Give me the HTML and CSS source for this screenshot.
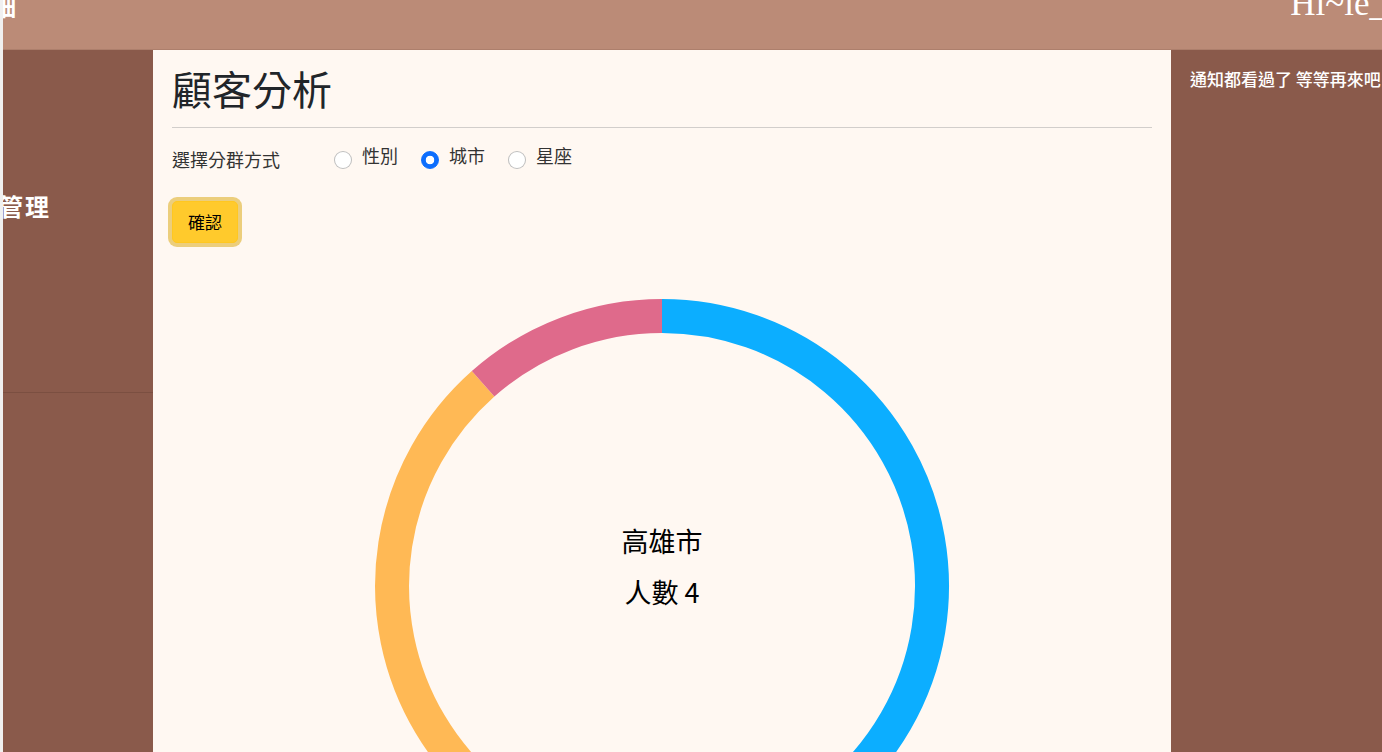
FILE: index.html
```html
<!DOCTYPE html>
<html lang="zh-Hant">
<head>
<meta charset="utf-8">
<title>顧客分析</title>
<link rel="stylesheet" href="styles.css">
</head>
<body>
<div class="page">
  <header class="topbar">
    <div class="brand">細</div>
    <div class="greeting">Hi~ie_</div>
  </header>
  <div class="layout">
    <aside class="sidebar">
      <div class="nav-item">管理</div>
      <div class="nav-item nav-item--rest"></div>
    </aside>
    <main class="content">
      <h1 class="title">顧客分析</h1>
      <hr class="divider">
      <div class="group-row">
        <span class="group-label">選擇分群方式</span>
        <label class="option"><input type="radio" name="group" class="radio"><span class="option-text">性別</span></label>
        <label class="option"><input type="radio" name="group" class="radio" checked><span class="option-text">城市</span></label>
        <label class="option"><input type="radio" name="group" class="radio"><span class="option-text">星座</span></label>
      </div>
      <button class="confirm-btn" type="button">確認</button>
      <div class="chart">
        <svg class="donut" viewBox="-290 -290 580 580" width="580" height="580">
          <path d="M 0 -270 A 270 270 0 0 1 92.35 253.72" stroke="#0caeff" />
          <path d="M 92.35 253.72 A 270 270 0 0 1 -178.9 -202.2" stroke="#ffb955" />
          <path d="M -178.9 -202.2 A 270 270 0 0 1 0 -270" stroke="#df6a8b" />
        </svg>
        <div class="chart-center">
          <div class="chart-city">高雄市</div>
          <div class="chart-count">人數 4</div>
        </div>
      </div>
    </main>
    <aside class="notice">
      <p class="notice-text">通知都看過了 等等再來吧</p>
    </aside>
  </div>
</div>
</body>
</html>
```

FILE: styles.css
```css
* { box-sizing: border-box; }

html, body {
  margin: 0;
  padding: 0;
  height: 100%;
}

body {
  background: #f0f0f0;
  font-family: "Noto Sans CJK TC", "Noto Sans", sans-serif;
  color: #212529;
  overflow: hidden;
}

.page {
  margin-left: 3px;
  height: 100vh;
  display: flex;
  flex-direction: column;
  overflow: hidden;
}

.topbar {
  height: 50px;
  flex-shrink: 0;
  background: #bb8b77;
  border-bottom: 1px solid #ad7f6c;
  display: flex;
  justify-content: space-between;
  align-items: flex-start;
  overflow: hidden;
}

.brand {
  font-size: 24px;
  font-weight: 700;
  line-height: 24px;
  color: #fff;
  margin-top: -6px;
  margin-left: -11px;
}

.greeting {
  font-family: "Liberation Serif", serif;
  font-size: 35px;
  line-height: 35px;
  color: #fff;
  white-space: nowrap;
  flex-shrink: 0;
  margin-top: -14px;
  margin-right: -5px;
}

.layout {
  flex: 1;
  display: flex;
  min-height: 0;
}

.sidebar {
  width: 150px;
  flex-shrink: 0;
  background: #8a5a4b;
  overflow: hidden;
}

.nav-item {
  height: 343px;
  padding-top: 138px;
  border-bottom: 1px solid #7b4f41;
  color: #fff;
  font-size: 24px;
  font-weight: 700;
  line-height: 36px;
  letter-spacing: 2px;
  margin-left: -4px;
  white-space: nowrap;
}

.nav-item--rest {
  border-bottom: none;
  height: auto;
  padding: 0;
}

.content {
  flex: 1;
  background: #fff8f2;
  padding: 14px 19px 0 19px;
  overflow: hidden;
  min-width: 0;
}

.title {
  margin: 0;
  font-size: 40px;
  font-weight: 400;
  line-height: 48px;
  color: #212529;
}

.divider {
  margin: 15px 0 0 0;
  border: 0;
  border-top: 1px solid #d2cecb;
  height: 0;
}

.group-row {
  display: flex;
  align-items: flex-start;
  height: 27px;
  margin-top: 14px;
  font-size: 18px;
  line-height: 27px;
}

.group-label {
  margin-top: 4px;
  margin-right: 54px;
  color: #333;
}

.option {
  display: flex;
  align-items: flex-start;
  gap: 10px;
  margin-right: 23px;
  color: #333;
}

.radio {
  appearance: none;
  -webkit-appearance: none;
  width: 18px;
  height: 18px;
  margin: 9px 0 0 0;
  border: 1px solid rgba(0, 0, 0, 0.25);
  border-radius: 50%;
  background: #fff;
}

.radio:checked {
  border-color: #0d6efd;
  background: radial-gradient(circle, #fff 0 4px, #0d6efd 4.6px);
}

.option-text {
  line-height: 27px;
}

.confirm-btn {
  display: block;
  margin-top: 32px;
  height: 42px;
  padding: 0 15px;
  font-family: "Noto Sans CJK TC", sans-serif;
  font-size: 17px;
  line-height: 40px;
  color: #000;
  background: #ffca2c;
  border: 1px solid #ffc720;
  border-radius: 5px;
  box-shadow: 0 0 0 4px rgba(217, 164, 6, 0.5);
}

.chart {
  position: relative;
  width: 580px;
  height: 580px;
  margin: 53px auto 0 auto;
}

.donut {
  display: block;
}

.donut path {
  fill: none;
  stroke-width: 34;
}

.chart-center {
  position: absolute;
  left: 0;
  right: 0;
  top: 219px;
  text-align: center;
  color: #000;
  font-size: 27px;
  line-height: 51px;
}

.notice {
  width: 211px;
  flex-shrink: 0;
  background: #8a5a4b;
  padding: 17px 0 0 19px;
  overflow: hidden;
}

.notice-text {
  margin: 0;
  color: #fff;
  font-size: 17px;
  font-weight: 500;
  line-height: 24px;
  white-space: nowrap;
}
```
